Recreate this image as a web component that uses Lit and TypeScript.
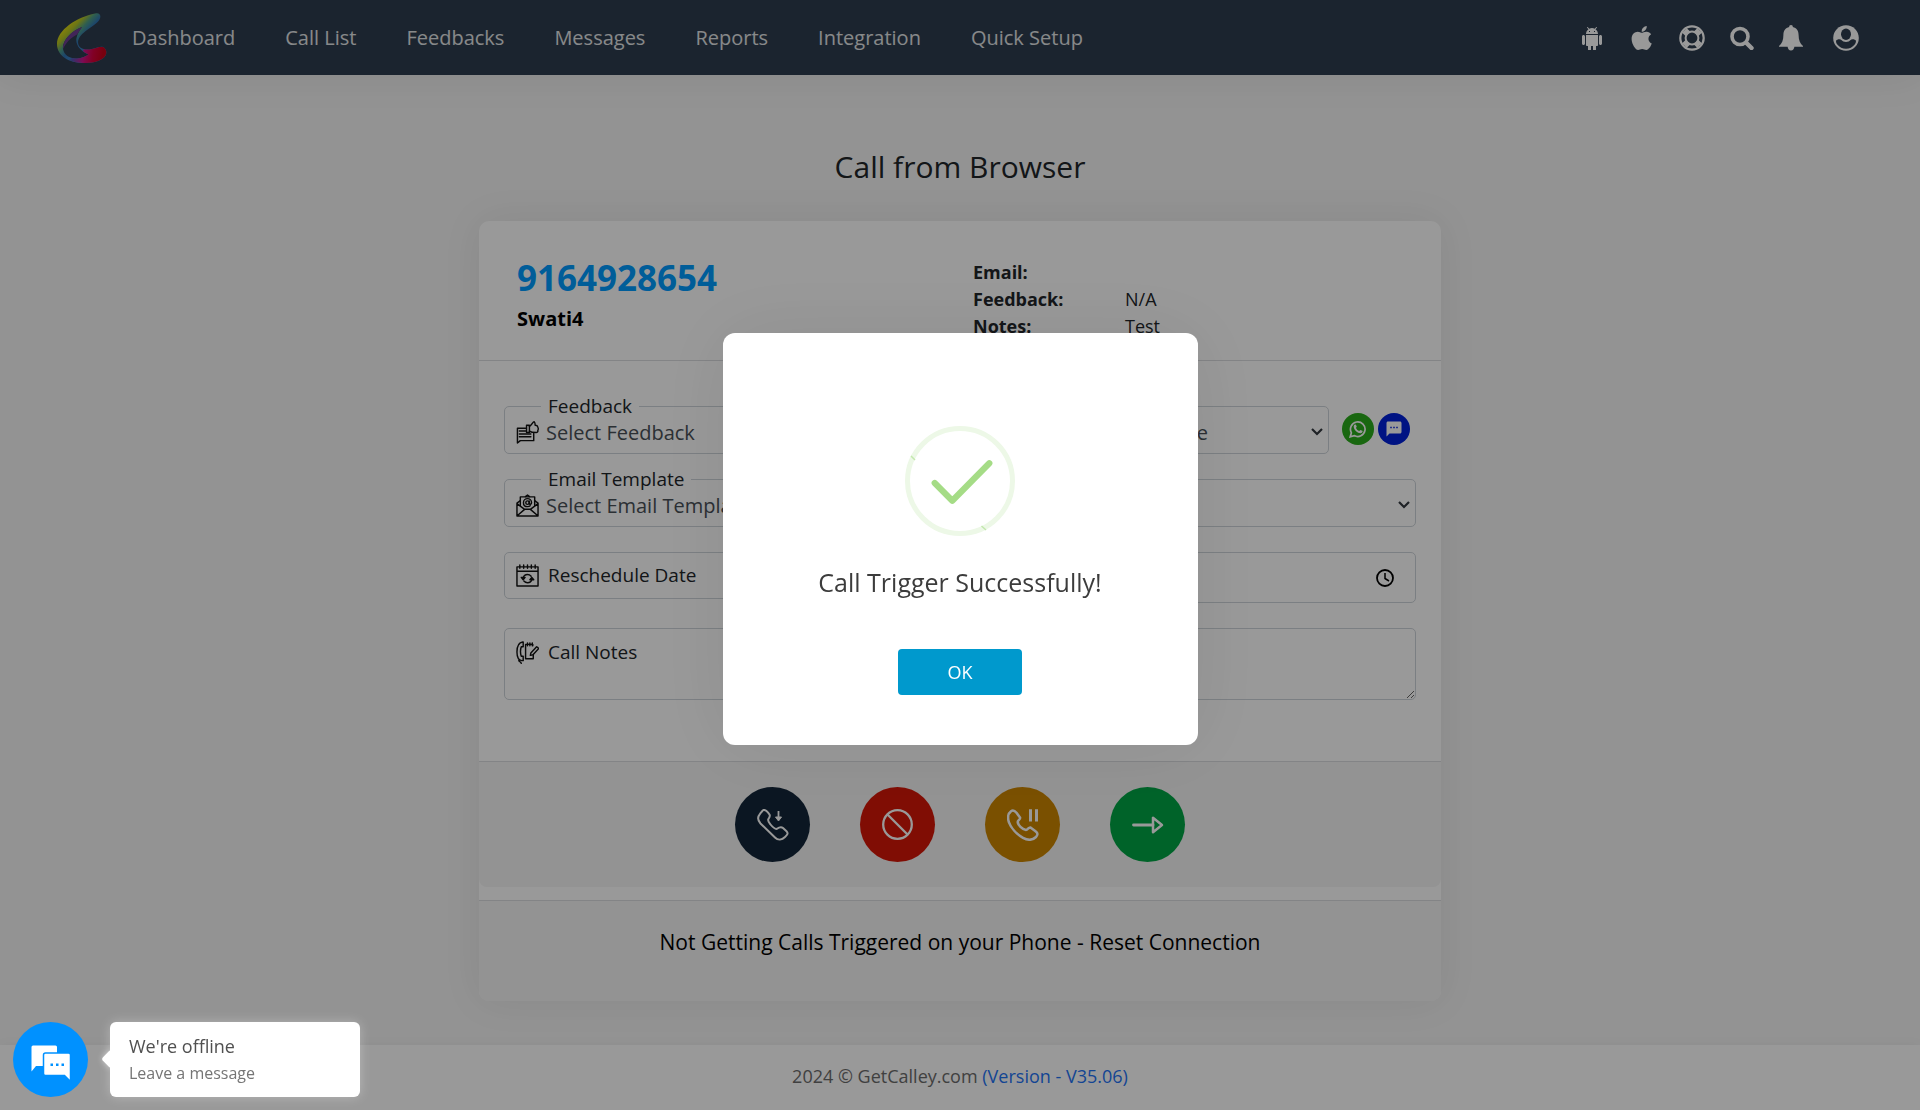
import { LitElement, html, css, svg } from "lit";
import { customElement, state } from "lit/decorators.js";

const NAV = ["Dashboard", "Call List", "Feedbacks", "Messages", "Reports", "Integration", "Quick Setup"];

const logo = html`<svg class="logo" viewBox="0 0 50 50" aria-hidden="true">
  <defs>
    <linearGradient id="arc" gradientUnits="userSpaceOnUse" x1="8" y1="12" x2="27" y2="30">
      <stop offset="0" stop-color="#e8dc10" />
      <stop offset=".3" stop-color="#b5c423" />
      <stop offset=".55" stop-color="#4f9d86" />
      <stop offset=".8" stop-color="#2f74b4" />
      <stop offset="1" stop-color="#3a7fc0" />
    </linearGradient>
    <linearGradient id="base" gradientUnits="userSpaceOnUse" x1="8" y1="36" x2="46" y2="42">
      <stop offset="0" stop-color="#2f74b4" stop-opacity="0" />
      <stop offset=".25" stop-color="#5a50b0" />
      <stop offset=".5" stop-color="#d0148c" />
      <stop offset=".75" stop-color="#d8003c" />
      <stop offset="1" stop-color="#c80018" />
    </linearGradient>
    <clipPath id="lower"><path d="M6 50L15 45L22 43Q28 41 26 37L30 34H50V50Z" /></clipPath>
  </defs>
  <path fill="url(#arc)" fill-rule="evenodd" d="M38 .5C43-1 44.500 3 42.500 6.500C38 14 22 19 21 29C21 36 28 37.500 35 36C40 35 43 33 46 34C50 36 50.500 41 47 44.500C42 49 34 50 27 50C12 50 0 43 0 31C0 17 20 4 38 .5ZM25 14C14 18 5 28 6 36C7 42 13 46 20 45.500C25 45 29 43 31.500 41.500C24 38 18 32 19.500 25C20.500 20 23 17 25 14Z" />
  <path fill="url(#base)" fill-rule="evenodd" clip-path="url(#lower)" d="M38 .5C43-1 44.500 3 42.500 6.500C38 14 22 19 21 29C21 36 28 37.500 35 36C40 35 43 33 46 34C50 36 50.500 41 47 44.500C42 49 34 50 27 50C12 50 0 43 0 31C0 17 20 4 38 .5ZM25 14C14 18 5 28 6 36C7 42 13 46 20 45.500C25 45 29 43 31.500 41.500C24 38 18 32 19.500 25C20.500 20 23 17 25 14Z" />
  <path fill="#6e3f93" d="M25 14C14 18 5 28 6 36C9 30 13 25 20 21.500Z" />
</svg>`;

const TOOLS = [
  {
    label: "Android app",
    icon: html`<svg viewBox="1 -1 24 24" class="tool"><path fill="currentColor" d="M6 18c0 .55.45 1 1 1h1v3.500c0 .83.67 1.500 1.500 1.500s1.500-.67 1.500-1.500V19h2v3.500c0 .83.67 1.500 1.500 1.500s1.500-.67 1.500-1.500V19h1c.55 0 1-.45 1-1V8H6v10zM3.500 8C2.670 8 2 8.670 2 9.500v7c0 .83.67 1.500 1.500 1.500S5 17.330 5 16.500v-7C5 8.670 4.330 8 3.500 8zm17 0c-.83 0-1.500.67-1.500 1.500v7c0 .83.67 1.500 1.500 1.500s1.500-.67 1.500-1.500v-7c0-.83-.67-1.500-1.500-1.500zm-4.970-5.840l1.300-1.300c.2-.2.2-.51 0-.71-.2-.2-.51-.2-.71 0l-1.480 1.480C13.850 1.230 12.950 1 12 1c-.96 0-1.860.23-2.660.63L7.850.15c-.2-.2-.51-.2-.71 0-.2.2-.2.51 0 .71l1.310 1.310C6.970 3.260 6 5.010 6 7h12c0-1.990-.97-3.750-2.470-4.840zM10 5H9V4h1v1zm5 0h-1V4h1v1z" /></svg>`,
  },
  {
    label: "iPhone app",
    icon: html`<svg viewBox="-26 32 448 448" class="tool"><path fill="currentColor" d="M318.7 268.7c-.2-36.7 16.4-64.4 50-84.8-18.8-26.9-47.2-41.7-84.7-44.6-35.5-2.800-74.3 20.7-88.5 20.7-15 0-49.4-19.7-76.4-19.7C63.3 141.2 4 184.8 4 273.5q0 39.3 14.4 81.2c12.800 36.7 59 126.7 107.2 125.2 25.2-.6 43-17.9 75.8-17.9 31.8 0 48.3 17.9 76.4 17.9 48.6-.7 90.4-82.5 102.6-119.3-65.2-30.7-61.7-90-61.7-91.9zm-56.6-164.2c27.3-32.4 24.800-61.9 24-72.5-24.1 1.400-52 16.4-67.9 34.9-17.5 19.800-27.8 44.3-25.6 71.9 26.1 2 49.9-11.4 69.5-34.3z" /></svg>`,
  },
  {
    label: "Support",
    icon: html`<svg viewBox="0 0 26 26" class="tool wide" fill="none" stroke="currentColor">
      <circle cx="13" cy="13" r="11.700" stroke-width="2.200" /><circle cx="13" cy="13" r="6.400" stroke-width="2" />
      <path stroke-width="6.500" d="M8.800 8.800L5.500 5.500M17.200 8.800L20.500 5.500M8.800 17.200L5.500 20.500M17.200 17.200L20.500 20.500" />
    </svg>`,
  },
  {
    label: "Search",
    icon: html`<svg viewBox="0 0 24 24" class="tool" fill="none" stroke="currentColor"><circle cx="10" cy="10.500" r="8" stroke-width="3.600" /><path stroke-width="4.400" stroke-linecap="round" d="M16.500 17L21.500 22" /></svg>`,
  },
  {
    label: "Notifications",
    icon: html`<svg viewBox="0 0 24 26" class="tool tall"><path fill="currentColor" d="M12 0C13.200 0 14 .8 13.800 2C17.600 2.800 19.600 5.800 19.600 10C19.600 15 21 18.500 24 21V21.800H15.400C15 24.200 14 25.600 12 25.600S9 24.200 8.600 21.800H0V21C3 18.500 4.400 15 4.400 10C4.400 5.800 6.400 2.800 10.200 2C10 .8 10.800 0 12 0Z" /></svg>`,
  },
  {
    label: "Account",
    icon: html`<svg viewBox="0 0 26 26" class="tool wide"><circle cx="13" cy="13" r="12.800" fill="currentColor" />
      <path fill="#2e3d4f" d="M4.300 19.500C2.800 17.500 2.500 15 4.300 14.700C8 13.500 9 15.800 13 15.800S18 13.500 21.700 14.700C23.500 15 23.200 17.500 21.700 19.500C19.500 22.300 16.500 23.700 13 23.700S6.500 22.300 4.300 19.500Z" />
      <ellipse cx="13" cy="9.500" rx="7" ry="7.500" fill="currentColor" /><ellipse cx="13" cy="9.200" rx="5" ry="5.700" fill="#2e3d4f" /></svg>`,
  },
];

const line = (body: unknown) =>
  html`<svg class="field-icon" viewBox="0 0 24 24" fill="none" stroke="#111" stroke-width="1.500" stroke-linejoin="round" stroke-linecap="round" aria-hidden="true">${body}</svg>`;

const feedbackIcon = line(svg`<path d="M10 7.500H1.500V23L4.500 20.500H18.500V13" /><path d="M3.500 10.500H10M3.500 13.500H15.500M3.500 16.500H15.500" /><path d="M11 4.500H14V12H11Z" /><path d="M14 10.500C16 12 19 12 21 12C22.500 12 23 11 22.700 10C23.500 9 23.300 7 22.800 6.500C22.500 5 21.500 4.500 20 4.500C20 3 20 1.500 19 .8C17.500 .5 17.300 3.500 14 5.500" />`);
const mailIcon = line(svg`<path d="M1 9.500V23H23V9.500L19.500 7M1 9.500L4.500 7M1 10L9 16M23 10L15 16M1.500 22.500L9 16H15L22.500 22.500" /><path d="M4.500 12V3H19.500V12M9.500 3L12 1L14.500 3" /><circle cx="12" cy="9" r="1.800" /><path d="M13.800 7.200V9.800C14 11.200 16.200 11 16.200 9C16.200 6.500 14.300 4.800 12 4.800S7.800 6.600 7.800 9S9.600 13.200 12 13.200C13.200 13.200 14 13 14.800 12.300" />`);
const calendarIcon = line(svg`<path d="M1 3H23V23H1ZM1 7.500H23M4 1V4.500M8 1V4.500M12 1V4.500M16 1V4.500M20 1V4.500" /><path d="M7.500 14.500C8 12.500 10 11 12 11C13.500 11 14.800 11.700 15.800 12.800M16.500 16C16 18.500 14 19.500 12 19.500C10.500 19.500 9.200 18.800 8.200 17.800" /><path fill="#111" d="M5.500 14H9.500L7.500 16.500ZM14.500 16.500H18.500L16.500 14Z" />`);
const notesIcon = line(svg`<path d="M7 1C3 1.500 1 6 1 11.500S3 20 6 20.500H7.500V16H5.500C4.500 13 4.500 9 5.500 6H7.500V1ZM3 20C2.500 22 5 21 5.500 23.300" /><path d="M17.500 5V3.500H10V18.500H18V14M12 2V5M14.500 2V5M17 2V5" /><path d="M23 7L21.500 6L15.500 12.500L15 15L17.500 14.500L23.500 8Z" />`);

const chevron = html`<svg class="chevron" viewBox="0 0 12 8" aria-hidden="true"><path fill="none" stroke="#343a40" stroke-width="2.200" d="M1 1L6 6L11 1" /></svg>`;

const glyph = (body: unknown) =>
  html`<svg viewBox="0 0 32 32" fill="none" stroke="#fff" stroke-linejoin="round" aria-hidden="true">${body}</svg>`;

const ACTIONS = [
  {
    label: "Call",
    tone: "navy",
    icon: glyph(svg`<path stroke-width="2" d="M6.500 1C8.500 .6 10.500 2.500 12.500 5.500C13.500 7.200 12.500 8.500 11.300 10.200C10.500 11.800 11.500 13 13.500 15.500C16 18.500 18 20.500 20 19.800C22.500 18 24.500 17.800 26 19L29.500 22.200C31.500 24.200 30.500 25.800 28 28C25 31 21 31.500 18 28.500L3.500 14.500C.8 11.500 .3 8 3 4.800C4.500 3 5.300 1.500 6.500 1Z" /><path stroke-width="1.800" d="M21.500 2V10" /><path fill="#fff" stroke-width="1" d="M18.500 8H24.500L21.500 12Z" />`),
  },
  {
    label: "End call",
    tone: "red",
    icon: glyph(svg`<circle cx="15.500" cy="15.500" r="14.300" stroke-width="2.300" /><path stroke-width="2.300" d="M5.500 5.500L25.500 25.500" />`),
  },
  {
    label: "Hold call",
    tone: "amber",
    icon: glyph(svg`<path stroke-width="2.500" d="M4 2.200C6 .8 8 2 9.500 3.800L13 8.500C14 10.200 10.500 11.300 10.700 13C11 16 15 20.500 19 21C20.800 21 21.500 18 23.500 18.500L28.500 22.300C31.500 24.500 30.500 26 29 28C26 31 21 31.500 16 28.800C10 25.500 4 19 1.800 13C.5 8.500 1 4.500 4 2.200Z" /><path stroke-width="3" d="M23.500 .2V12.500M29.500 .2V12.500" />`),
  },
  {
    label: "Next",
    tone: "green",
    icon: glyph(svg`<path stroke-width="2.800" stroke-linecap="round" d="M1.500 16H21" /><path stroke-width="2.500" d="M21 8.800V23.200L30 16Z" />`),
  },
];

@customElement("app-root")
export class AppRoot extends LitElement {
  @state() private dialogOpen = true;

  static styles = css`
    :host {
      display: flex;
      flex-direction: column;
      min-height: 100vh;
      background: #f5f5f5;
      color: #212529;
      font: 18px/27px "Open Sans", "Liberation Sans", sans-serif;
    }
    * { box-sizing: border-box; }
    button, input, select, textarea { font: inherit; color: inherit; }
    button { border: 0; padding: 0; cursor: pointer; }
    a { color: inherit; text-decoration: none; }

    .topbar {
      display: flex;
      align-items: center;
      height: 75px;
      padding: 0 61px 0 57px;
      background: #2e3d4f;
      box-shadow: 0 0 40px rgba(0, 0, 0, 0.08);
    }
    .logo { width: 50px; height: 50px; margin-right: 25px; }
    .nav { display: flex; gap: 50px; flex: 1; font-size: 20px; font-weight: 500; color: #e2e4e6; white-space: nowrap; }
    .tools { display: flex; align-items: center; gap: 25px; color: #fff; }
    .tools button { display: flex; background: none; color: inherit; }
    .tools button:last-child { margin-left: 5px; }
    .tool { width: 24px; height: 24px; }
    .wide { width: 26px; height: 26px; }
    .tall { height: 26px; }

    main { flex: 1; display: flex; flex-direction: column; align-items: center; padding: 74px 16px 41px; }
    h1 { margin: 0 0 36px; font-size: 30px; line-height: 36px; font-weight: 400; }
    .card { width: 100%; max-width: 962px; background: #fff; border-radius: 10px; box-shadow: 0 0 40px rgba(0, 0, 0, 0.07); }
    .columns { display: grid; grid-template-columns: 1fr 1fr; column-gap: 26px; align-items: start; }

    .contact { padding: 38px 25px 20px; border-bottom: 1px solid #dadcdf; }
    .who { padding-left: 13px; }
    .phone { margin: 0; font-size: 35px; line-height: 38px; font-weight: 700; color: #009cff; }
    .name { margin: 8px 0 0; font-size: 20px; font-weight: 700; color: #000; }
    dl { display: grid; grid-template-columns: 152px 1fr; margin: 0; min-height: 81px; }
    dt { font-weight: 700; }
    dd { margin: 0; min-height: 27px; }

    form { display: flex; flex-direction: column; gap: 25px; padding: 45px 25px 61px; }
    .box { display: flex; min-width: 0; margin: 0; padding: 0 11px; border: 1px solid #ced4da; border-radius: 5px; }
    fieldset.box { display: block; flex: 1; margin-top: -13px; padding: 0 5px 0 11px; }
    legend { margin-left: 25px; padding: 0 7px; font-size: 19px; line-height: 26px; }
    .pick { display: flex; align-items: center; height: 34px; padding-bottom: 8px; }
    .pick select {
      flex: 1; min-width: 0; padding: 0; border: 0; background: none; appearance: none;
      font-size: 20px; line-height: 27px; color: #495057;
    }
    .field-icon { flex: none; width: 23px; height: 23px; margin-right: 7px; }
    .chevron { flex: none; width: 12px; height: 8px; }
    .inline { height: 47px; align-items: center; }
    .inline input { flex: 1; min-width: 0; border: 0; padding: 0 0 0 2px; background: none; font-size: 19px; }
    .time { height: 51px; padding-right: 20px; }
    .time input::-webkit-calendar-picker-indicator { display: none; }
    .clock { width: 20px; height: 20px; background: none; }
    .clock svg { display: block; }
    .notes { padding: 0 0 0 11px; }
    .notes .field-icon { margin-top: 12px; }
    .notes textarea { flex: 1; min-width: 0; height: 70px; border: 0; padding: 10px 0 10px 2px; background: none; font-size: 19px; line-height: 26px; outline: 0; }
    ::placeholder { color: #212529; opacity: 1; }
    .send { display: flex; align-items: center; gap: 4px; padding-right: 6px; }
    .send fieldset { margin-right: 9px; }
    .round { display: grid; place-items: center; border-radius: 50%; }
    .send .round { width: 32px; height: 32px; margin-bottom: 3px; }
    .whatsapp { background: #2bac1b; }
    .sms { background: #0021da; }

    .actions { display: flex; justify-content: center; flex-wrap: wrap; gap: 50px; padding: 25px; border-top: 1px solid #dadcdf; background: #f5f5f5; border-radius: 0 0 8px 8px; }
    .actions .round { width: 75px; height: 75px; }
    .actions svg { width: 32px; height: 32px; }
    .navy { background: #132639; }
    .red { background: #d61707; }
    .amber { background: #cc8500; }
    .green { background: #00a545; }
    .reset { margin-top: 13px; padding: 25px 16px 43px; border-top: 1px solid #dadcdf; border-radius: 0 0 10px 10px; background: #f5f5f5; text-align: center; font-size: 21px; line-height: 32px; color: #000; }

    footer { padding: 18px 16px 20px; background: #fff; text-align: center; color: #6c6c6c; box-shadow: 0 0 12px rgba(0, 0, 0, 0.04); }
    footer a { color: #1f74f5; }

    .backdrop { position: fixed; inset: 0; display: flex; align-items: center; justify-content: center; padding: 0 16px 32px; background: rgba(0, 0, 0, 0.4); }
    .dialog { display: flex; flex-direction: column; align-items: center; width: 475px; padding: 93px 20px 50px; border-radius: 12px; background: #fff; box-shadow: 0 0 80px rgba(0, 0, 0, 0.08); }
    .success { width: 110px; height: 110px; }
    .dialog h2 { margin: 27px 0 48px; font-size: 25px; line-height: 38px; font-weight: 400; color: #3c3c3c; text-align: center; }
    .ok { width: 124px; height: 46px; border-radius: 4px; background: #0099cd; color: #fff; font-size: 18px; }

    .chat { position: fixed; left: 13px; bottom: 13px; display: flex; align-items: center; gap: 22px; }
    .bubble { width: 75px; height: 75px; border-radius: 50%; background: #0091ff; }
    .bubble svg { display: block; width: 75px; height: 75px; }
    .teaser { position: relative; width: 250px; height: 75px; padding: 11px 19px; border-radius: 6px; background: #fff; text-align: left; box-shadow: 0 0 12px rgba(255, 255, 255, 0.3); }
    .teaser::before { content: ""; position: absolute; left: -6px; top: 30px; width: 14px; height: 14px; border-radius: 3px; background: #fff; transform: rotate(45deg); box-shadow: 0 0 6px rgba(255, 255, 255, 0.5); }
    .teaser p { margin: 0; font-size: 16px; color: #757575; }
    .teaser .lead { font-size: 18px; color: #505050; }
  `;

  private select(id: string, label: string, option: string, icon: unknown = null) {
    return html`<fieldset class="box">
      <legend><label for=${id}>${label}</label></legend>
      <div class="pick">
        ${icon}
        <select id=${id}><option>${option}</option></select>
        ${chevron}
      </div>
    </fieldset>`;
  }

  private close() {
    this.dialogOpen = false;
  }

  render() {
    return html`
      <header class="topbar">
        ${logo}
        <nav class="nav">${NAV.map((item) => html`<a href="#">${item}</a>`)}</nav>
        <div class="tools">
          ${TOOLS.map((tool) => html`<button aria-label=${tool.label}>${tool.icon}</button>`)}
        </div>
      </header>

      <main>
        <h1>Call from Browser</h1>
        <section class="card">
          <div class="contact columns">
            <div class="who">
              <p class="phone">9164928654</p>
              <p class="name">Swati4</p>
            </div>
            <dl>
              <dt>Email:</dt><dd></dd>
              <dt>Feedback:</dt><dd>N/A</dd>
              <dt>Notes:</dt><dd>Test</dd>
            </dl>
          </div>

          <form>
            <div class="columns">
              ${this.select("feedback", "Feedback", "Select Feedback", feedbackIcon)}
              <div class="send">
                ${this.select("template", "Template", "Select SMS Template", mailIcon)}
                <button type="button" class="round whatsapp" aria-label="Send WhatsApp">
                  <svg width="18" height="18" viewBox="0 0 18 18" fill="none" stroke="#fff" aria-hidden="true">
                    <path stroke-width="1.700" d="M1.200 16.800L2.400 12.800A7.300 7.300 0 1 1 5.200 15.600Z" />
                    <path fill="#fff" stroke="none" d="M6 4.500C6.800 4.300 7 4.700 7.700 6.500C7.800 7 7 7.600 7 7.900C7.700 9.500 8.800 10.400 10.200 11C10.600 11 11 10 11.400 10C12 10 13.500 10.900 13.600 11.100C13.800 12 12.800 13.200 11.400 13.200C8.500 13 5 9.800 4.700 6.900C4.600 5.700 5.300 4.800 6 4.500Z" />
                  </svg>
                </button>
                <button type="button" class="round sms" aria-label="Send SMS">
                  <svg width="18" height="18" viewBox="0 0 24 24" aria-hidden="true"><path fill="#fff" d="M20 2H4c-1.100 0-2 .9-2 2L2 22l4-4h14c1.100 0 2-.9 2-2V4c0-1.100-.9-2-2-2zM9 11H7V9h2v2zm4 0h-2V9h2v2zm4 0h-2V9h2v2z" /></svg>
                </button>
              </div>
            </div>
            <div class="columns">
              ${this.select("email", "Email Template", "Select Email Template", mailIcon)}
              ${this.select("list", "List", "Select List")}
            </div>
            <div class="columns">
              <div class="box inline">${calendarIcon}<input aria-label="Reschedule Date" placeholder="Reschedule Date" /></div>
              <div class="box inline time">
                <input type="time" aria-label="Reschedule Time" />
                <button type="button" class="clock" aria-label="Pick time">
                  <svg width="20" height="20" viewBox="0 0 20 20" fill="none" stroke="#000"><circle cx="10" cy="10" r="8" stroke-width="1.800" /><path stroke-width="1.500" d="M10 5V10.500L14 13" /></svg>
                </button>
              </div>
            </div>
            <div class="box notes">${notesIcon}<textarea aria-label="Call Notes" placeholder="Call Notes"></textarea></div>
          </form>

          <div class="actions">
            ${ACTIONS.map((a) => html`<button class="round ${a.tone}" aria-label=${a.label}>${a.icon}</button>`)}
          </div>
          <div class="reset">Not Getting Calls Triggered on your Phone - <a href="#">Reset Connection</a></div>
        </section>
      </main>

      <footer>2024 © GetCalley.com <a href="#">(Version - V35.06)</a></footer>

      ${this.dialogOpen
        ? html`<div class="backdrop">
            <div class="dialog" role="dialog" aria-modal="true" aria-labelledby="dialog-title">
              <svg class="success" viewBox="0 0 110 110" fill="none" aria-hidden="true">
                <circle cx="55" cy="55" r="52.500" stroke="#edf8e7" stroke-width="5" />
                <path stroke="#c3e8ae" stroke-width="1.500" d="M6 30L10 34M76.500 100L81 104" />
                <path stroke="#a5dc86" stroke-width="6.200" stroke-linecap="round" stroke-linejoin="round" d="M29.700 57L47.300 74.700L84.300 37.300" />
              </svg>
              <h2 id="dialog-title">Call Trigger Successfully!</h2>
              <button class="ok" @click=${this.close}>OK</button>
            </div>
          </div>`
        : null}

      <div class="chat">
        <button class="bubble" aria-label="Open chat">
          <svg viewBox="0 0 75 75" aria-hidden="true">
            <path fill="#fff" d="M20 23.500H42.500Q44 23.500 44 25V44H23L18.500 49.500V25Q18.500 23.500 20 23.500Z" />
            <path fill="#fff" stroke="#0091ff" stroke-width="1.500" d="M32.500 31H55.500Q57.500 31 57.500 33V59.500L51.500 53.500H32.500Q30.500 53.500 30.500 51.500V33Q30.500 31 32.500 31Z" />
            <path fill="#0091ff" d="M37.500 41.500h2.500v2.500h-2.500zM43 41.500h2.500v2.500h-2.500zM48.500 41.500h2.500v2.500h-2.500z" />
          </svg>
        </button>
        <div class="teaser">
          <p class="lead">We're offline</p>
          <p>Leave a message</p>
        </div>
      </div>
    `;
  }
}
